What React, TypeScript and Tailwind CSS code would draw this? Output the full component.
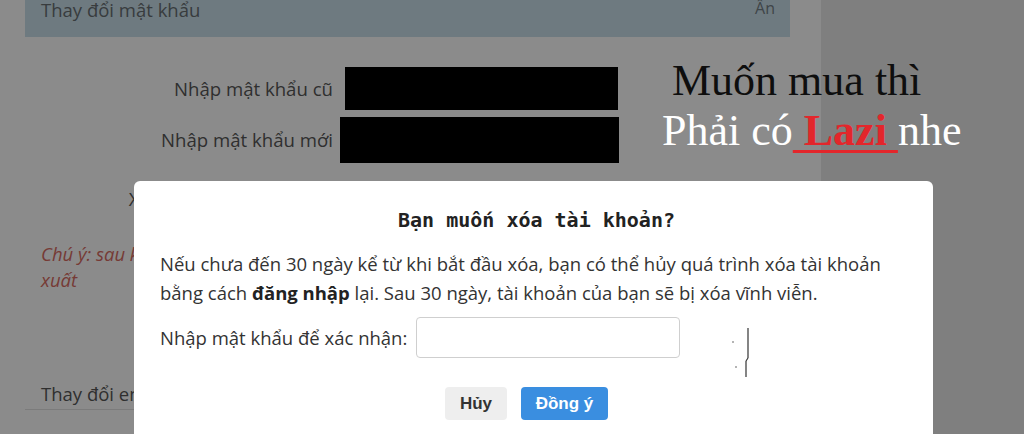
import React from "react";

const sans = "font-['Open_Sans',sans-serif]";

const PageRow = ({ label, boxClass }: { label: string; boxClass?: string }) => (
	<div className="flex items-center">
		<div className="w-[308px] text-right text-[18.6px] text-[#2f2f2f]">{label}</div>
		<div className={boxClass} />
	</div>
);

const App = () => {
	return (
		<div className={`relative w-[1024px] h-[434px] overflow-hidden bg-[#7f7f7f] flex ${sans}`}>
			{/* trang cài đặt phía sau lớp phủ */}
			<div className="w-[821px] h-full bg-[#8b8b8b] pl-[25px] pr-[31px] flex flex-col">
				<div className="h-[37px] bg-[#6e7a80] pl-4 pr-[15px] flex justify-between items-start">
					<span className="text-[18.5px] leading-[20px] text-[#383c3e]">Thay đổi mật khẩu</span>
					<span className="-mt-[3px] text-[16px] leading-[22px] text-[#3f4548]">Ẩn</span>
				</div>

				<div className="mt-[30px] flex flex-col">
					<PageRow label="Nhập mật khẩu cũ" boxClass="ml-[12px] w-[273px] h-[43px] bg-black" />
					<div className="mt-[7px]">
						<PageRow label="Nhập mật khẩu mới" boxClass="ml-[7px] w-[279px] h-[46px] bg-black" />
					</div>
					<div className="mt-[14px]">
						<PageRow label="Xác nhận mật khẩu mới" boxClass="ml-[7px] w-[279px] h-[44px]" />
					</div>
				</div>

				<p className="mt-[20px] pl-4 pr-4 text-[18.5px] leading-[26px] italic text-[#763a35]">
					Chú ý: sau khi đổi mật khẩu, các thiết bị khác sẽ bị đăng
					<br />
					xuất
				</p>

				<div className="mt-[88px] pl-4 h-[29px] text-[18.5px] leading-[26px] text-[#2f2f2f] border-b border-[#7b7b7b]">
					Thay đổi email
				</div>
			</div>

			{/* ghi chú phía trên */}
			<div className="absolute left-[662px] top-[56px] font-['Liberation_Serif',serif] text-[44px] leading-[50px]">
				<div className="ml-[10px] text-[#0e0e0e]">Muốn mua thì</div>
				<div className="text-white whitespace-pre">
					Phải có
					<span className="font-bold text-[#e3262b] underline decoration-[#e3262b] decoration-[3px] underline-offset-[5px]">
						{" Lazi "}
					</span>
					nhe
				</div>
			</div>

			{/* hộp thoại xác nhận */}
			<div className="absolute left-[134px] top-[181px] w-[799px] h-[270px] bg-white rounded-t-[6px] pl-[26px] pr-[20px]">
				<h2 className="mt-[28px] text-center font-['DejaVu_Sans_Mono',monospace] font-bold text-[20px] leading-[22px] text-[#222]">
					Bạn muốn xóa tài khoản?
				</h2>
				<p className="mt-[18px] text-[18.5px] leading-[29px] text-[#333]">
					Nếu chưa đến 30 ngày kể từ khi bắt đầu xóa, bạn có thể hủy quá trình xóa tài khoản
					<br />
					bằng cách <b className="font-bold text-[#222]">đăng nhập</b> lại. Sau 30 ngày, tài khoản của bạn sẽ bị xóa vĩnh viễn.
				</p>
				<div className="mt-[10px] flex items-center">
					<label className="text-[18.5px] text-[#333]">Nhập mật khẩu để xác nhận:</label>
					<input className="ml-[9px] w-[264px] h-[41px] border border-[#cfcfcf] rounded-[4px] outline-none" />
				</div>
				<div className="mt-[29px] flex justify-center gap-[14px] pr-[20px] font-['Liberation_Sans',Arial,sans-serif]">
					<button className="w-[62px] h-[33px] rounded-[4px] bg-[#eeeeee] text-[17px] font-bold text-[#333]">Hủy</button>
					<button className="w-[87px] h-[33px] rounded-[4px] bg-[#3a8ee0] text-[17px] font-bold text-white">Đồng ý</button>
				</div>

				{/* vết vẽ lạc trong ảnh gốc */}
				<svg className="absolute left-[598px] top-[145px]" width="20" height="54" viewBox="0 0 20 54">
					<line x1="16" y1="2" x2="16" y2="32" stroke="#333" strokeWidth="1.2" />
					<line x1="16" y1="32" x2="14" y2="35" stroke="#333" strokeWidth="1.2" />
					<line x1="14" y1="35" x2="14" y2="51" stroke="#333" strokeWidth="1.2" />
					<circle cx="1" cy="16" r="0.8" fill="#555" />
					<circle cx="4" cy="41" r="0.8" fill="#555" />
				</svg>
			</div>
		</div>
	);
};

export default App;
